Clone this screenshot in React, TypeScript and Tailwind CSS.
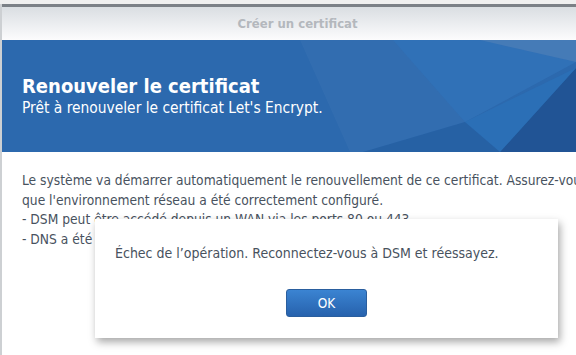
const font = { fontFamily: '"DejaVu Sans Condensed", "DejaVu Sans", sans-serif' }

function BannerArt() {
  // decorative facets on the right side of the banner (local coords, banner origin x=2,y=40)
  return (
    <svg className="absolute inset-0" width="591" height="112" viewBox="0 0 591 112">
      <polygon points="298,0 391,0 463,82 361,112 348,112" fill="#ffffff" opacity="0.03" />
      <polygon points="391,0 478,0 574,22 463,82" fill="#3d86cc" opacity="0.3" />
      <polygon points="478,0 591,0 591,18 574,22" fill="#ffffff" opacity="0.12" />
      <polygon points="574,22 591,18 591,112 498,112 574,28" fill="#15407c" opacity="0.5" />
      <polygon points="463,82 574,28 498,112" fill="#2a78c2" opacity="0.45" />
      <polygon points="463,82 361,112 498,112" fill="#1c4f90" opacity="0.3" />
    </svg>
  )
}

export default function App() {
  return (
    <div className="relative w-[576px] h-[355px] overflow-hidden bg-[#efefef]" style={font}>
      <div className="flex h-full">
        <div className="w-[2px] shrink-0 mt-[4px] bg-[#cdd0d3]" />
        <div className="w-[591px] shrink-0 flex flex-col bg-white">
          <div className="h-[4px] bg-[#efefef]" />
          <div className="h-[3px] bg-[#7b8086]" />
          <div className="h-[33px] flex items-center justify-center bg-gradient-to-b from-[#dadee2] to-[#fcfcfd]">
            <span className="text-[13px] font-bold text-[#b4b8bd]">Créer un certificat</span>
          </div>
          <div className="relative h-[112px] bg-[#2c69ae] overflow-hidden">
            <BannerArt />
            <div className="relative pl-[20px] pt-[34px] text-white">
              <div className="text-[20px] leading-[25px] font-bold">Renouveler le certificat</div>
              <div className="text-[15.4px] leading-[19px]">Prêt à renouveler le certificat Let's Encrypt.</div>
            </div>
          </div>
          <div className="pl-[20px] pt-[19px] text-[13.7px] leading-[19.5px] text-[#48525e]">
            <p className="whitespace-nowrap">
              Le système va démarrer automatiquement le renouvellement de ce certificat. Assurez-vous
            </p>
            <p>que l'environnement réseau a été correctement configuré.</p>
            <p>- DSM peut être accédé depuis un WAN via les ports 80 ou 443.</p>
            <p>- DNS a été correctement configuré.</p>
          </div>
        </div>
      </div>

      <div className="absolute left-[95px] top-[219px] w-[463px] h-[119px] bg-white shadow-[2px_4px_8px_rgba(0,0,0,0.35)] flex flex-col">
        <p className="pl-[20px] pt-[25px] text-[14px] leading-[18px] text-[#48525e]">
          Échec de l’opération. Reconnectez-vous à DSM et réessayez.
        </p>
        <div className="flex justify-center mt-[27px]">
          <button className="w-[81px] h-[28px] rounded-[3px] border border-[#2a5e9e] bg-gradient-to-b from-[#3b84d2] to-[#2762ad] text-[13.5px] text-white">
            OK
          </button>
        </div>
      </div>
    </div>
  )
}
